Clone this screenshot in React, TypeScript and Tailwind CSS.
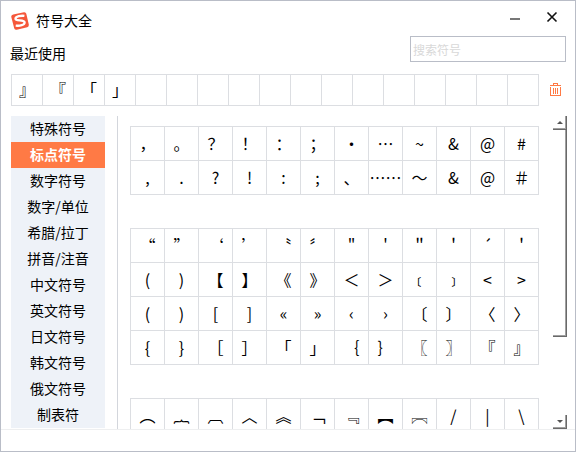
import React, { useState } from "react";

const recent = ["』", "『", "「", "」", ...Array<string>(13).fill("")];

const categories = [
  "特殊符号",
  "标点符号",
  "数字符号",
  "数字/单位",
  "希腊/拉丁",
  "拼音/注音",
  "中文符号",
  "英文符号",
  "日文符号",
  "韩文符号",
  "俄文符号",
  "制表符",
];

const groups: string[][] = [
  [
    "，", "。", "？", "！", "：", "；", "·", "…", "~", "&", "@", "#",
    ",", ".", "?", "!", ":", ";", "、", "……", "～", "&", "@", "＃",
  ],
  [
    "“", "”", "‘", "’", "〝", "〞", "\"", "'", "＂", "＇", "´", "＇",
    "(", ")", "【", "】", "《", "》", "＜", "＞", "﹝", "﹞", "<", ">",
    "(", ")", "[", "]", "«", "»", "‹", "›", "〔", "〕", "〈", "〉",
    "{", "}", "［", "］", "「", "」", "｛", "｝", "〖", "〗", "『", "』",
  ],
  ["︵", "︷", "︹", "︿", "︽", "﹁", "﹃", "︻", "︗", "/", "|", "\\"],
];

function Logo() {
  return (
    <svg viewBox="0 0 18 18" className="h-[18px] w-[18px]" aria-hidden="true">
      <path d="M2.2 2.4 13 .2Q14.9 0 15.3 1.8L17.8 12.6Q18 14.6 16.2 15.2L5.8 17.8Q3.8 18.1 3.2 16.2L.3 5Q0 2.9 2.2 2.4Z" fill="#f5573a" />
      <path d="M13.4 3.9C10.3 3.4 4.4 4.3 4.5 6.8 4.7 9.3 13.3 7.3 13.6 10.3 13.8 13 8.7 14.1 4.7 13.6" fill="none" stroke="#fff" strokeWidth="2.3" />
    </svg>
  );
}

function Trash() {
  return (
    <svg viewBox="0 0 11 13" className="h-[13px] w-[11px]" fill="none" stroke="#ff7a45" shapeRendering="crispEdges" aria-hidden="true">
      <path d="M0 2.5h11M3.5 2V.5h4V2M.5 4v8.5h10V4M3.5 4.5v6M5.5 4.5v6M7.5 4.5v6" />
    </svg>
  );
}

function Cell({ symbol }: { symbol: string }) {
  return (
    <button type="button" className="flex h-full min-w-0 items-center justify-center border-r border-b border-[#dcdee2] pb-0.5 text-base leading-6 whitespace-nowrap">
      {symbol}
    </button>
  );
}

function ScrollBar() {
  return (
    <div className="flex w-3.5 shrink-0 flex-col">
      <button type="button" aria-label="向上滚动" className="flex h-3.5 shrink-0 items-center justify-center border-r border-b border-[#696969] shadow-[inset_-1px_-1px_0_#a0a0a0]">
        <svg viewBox="0 0 6 3" className="h-[3px] w-1.5" aria-hidden="true"><path d="M3 0 6 3H0Z" fill="#555" /></svg>
      </button>
      <div className="flex-1">
        <div className="h-[72.5%] border-r border-b border-[#696969] shadow-[inset_-1px_-1px_0_#a0a0a0]" />
      </div>
      <button type="button" aria-label="向下滚动" className="flex h-3.5 shrink-0 items-center justify-center border-r border-b border-[#696969] shadow-[inset_-1px_-1px_0_#a0a0a0]">
        <svg viewBox="0 0 6 3" className="h-[3px] w-1.5" aria-hidden="true"><path d="M0 0h6L3 3Z" fill="#555" /></svg>
      </button>
    </div>
  );
}

export default function App() {
  const [active, setActive] = useState("标点符号");
  return (
    <div lang="zh-CN" className="flex h-screen flex-col border border-[#b9bdc7] bg-white font-['Noto_Sans_CJK_SC',sans-serif] text-sm text-black">
      <header className="flex h-[35px] shrink-0 items-center justify-between pr-[17px] pl-2.5">
        <div className="flex items-center gap-[7px] pt-1">
          <Logo />
          <h1 className="pb-0.5 leading-5">符号大全</h1>
        </div>
        <div className="flex items-center gap-[26px] pb-1">
          <button type="button" aria-label="最小化" className="flex h-4 w-2.5 items-center pt-1">
            <span className="h-0.5 w-full bg-[#777]" />
          </button>
          <button type="button" aria-label="关闭">
            <svg viewBox="0 0 12 12" className="h-3 w-3" aria-hidden="true"><path d="m1.5 1.5 9 9m0-9-9 9" stroke="#111" strokeWidth="1.6" /></svg>
          </button>
        </div>
      </header>

      <div className="flex h-[38px] shrink-0 items-start justify-between pr-[9px] pl-[9px]">
        <h2 className="pt-[7px] leading-5">最近使用</h2>
        <input
          type="text"
          aria-label="搜索符号"
          placeholder="搜索符号"
          className="h-[26px] w-[156px] border border-[#b9bdc7] px-0.5 text-xs outline-none placeholder:text-[#d8d8d8]"
        />
      </div>

      <div className="flex shrink-0 items-center gap-[11px] pr-3 pl-2.5">
        <div className="grid h-8 flex-1 grid-cols-[repeat(17,minmax(0,1fr))] border-t border-l border-[#dcdee2]">
          {recent.map((s, i) => <Cell key={i} symbol={s} />)}
        </div>
        <button type="button" aria-label="清空最近使用" className="w-[13px] pb-0.5"><Trash /></button>
      </div>

      <main className="flex min-h-0 flex-1 border-b border-[#eeeff0] pt-2.5 pr-2 pl-2.5">
        <nav className="mb-px w-[94px] shrink-0 overflow-hidden bg-[#eef2f8]">
          {categories.map((name) => (
            <button
              key={name}
              type="button"
              onClick={() => setActive(name)}
              className={
                name === active
                  ? "block h-[26px] w-full bg-[#ff7a45] text-center leading-6 font-bold text-white pb-0.5"
                  : "block h-[26px] w-full text-center leading-6 pb-0.5"
              }
            >
              {name}
            </button>
          ))}
        </nav>
        <div className="ml-3 flex min-w-0 flex-1 flex-col gap-[33px] overflow-hidden border-l border-[#d3d6dc] pt-2.5 pr-3.5 pl-3">
          {groups.map((group, i) => (
            <div key={i} className="grid shrink-0 auto-rows-[34px] grid-cols-12 border-t border-l border-[#dcdee2]">
              {group.map((s, j) => <Cell key={j} symbol={s} />)}
            </div>
          ))}
        </div>
        <ScrollBar />
      </main>
      <footer className="h-[21px] shrink-0" />
    </div>
  );
}
